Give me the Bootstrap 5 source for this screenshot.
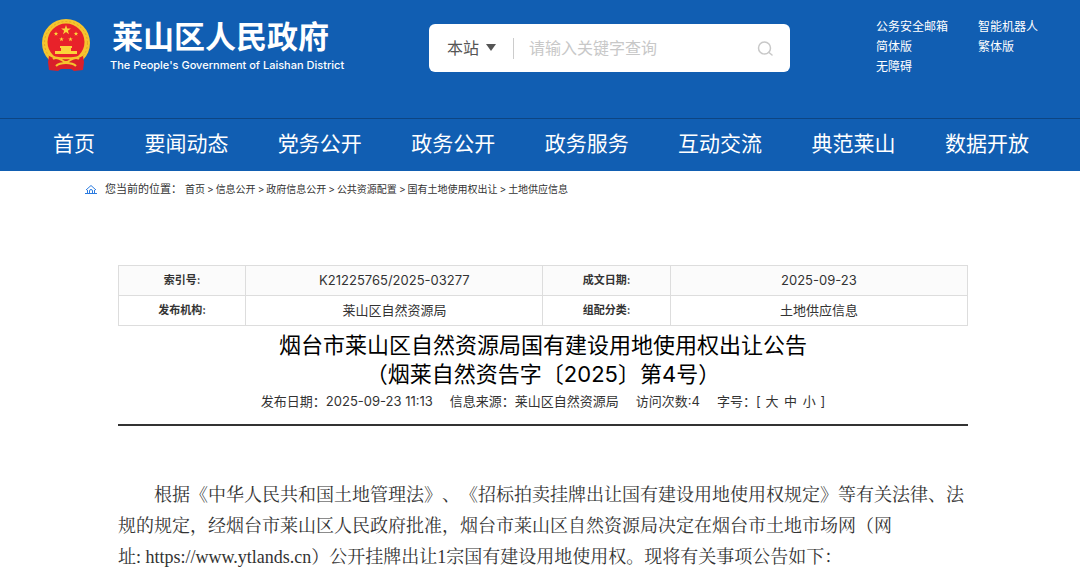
<!DOCTYPE html>
<html lang="zh-CN">
<head>
<meta charset="utf-8">
<meta name="viewport" content="width=device-width, initial-scale=1">
<title>烟台市莱山区自然资源局国有建设用地使用权出让公告</title>
<link href="https://cdn.jsdelivr.net/npm/bootstrap@5.3.0/dist/css/bootstrap.min.css" rel="stylesheet">
<style>
  body { font-family: Inter, "Noto Sans CJK SC", sans-serif; color: #333; background: #fff; text-spacing-trim: space-all; }
  a { color: inherit; text-decoration: none; }
  .site-header { background: #115eb2; color: #fff; }
  .masthead { display: grid; grid-template-columns: 387fr 447fr 204fr; height: 118px; padding-left: 42px; }
  .emblem { width: 48px; height: 54px; margin-top: 18px; }
  .brand-text { padding: 17px 0 0 20px; white-space: nowrap; }
  .brand-cn { font-size: 31px; line-height: 40px; font-weight: 700; margin: 0; padding-left: 2px; }
  .brand-en { font-size: 11px; line-height: 16px; font-weight: 500; margin: 0; }
  .search-box { height: 48px; max-width: 361px; margin-top: 24px; border-radius: 6px; background: #fff; padding: 0 17px 0 18px; }
  .search-box select { appearance: none; border: 0; background: transparent; color: #555; font-size: 16px; line-height: 24px; width: 50px; padding: 0; }
  .scope { position: relative; width: 51px; }
  .scope svg { position: absolute; right: 1px; top: 8px; pointer-events: none; }
  .divider { width: 1px; height: 21px; background: #ccc; margin: 0 15px 0 16px; }
  .search-box input { border: 0; outline: 0; padding: 0; min-width: 0; font-size: 16px; line-height: 24px; color: #555; }
  .search-box input::placeholder { color: #c8c8c8; opacity: 1; }
  .search-box button { border: 0; background: none; padding: 0; width: 18px; height: 18px; line-height: 1; }
  .tools { display: grid; grid-template-columns: 102px 1fr; align-content: start; font-size: 12px; line-height: 20px; padding-top: 17px; white-space: nowrap; }
  .main-nav { height: 53px; border-top: 1px solid #0d4583; padding: 0 51px 3px 53px; font-size: 21px; line-height: 30px; white-space: nowrap; }
  .crumbs { padding: 8px 85px 0; font-size: 11px; line-height: 20px; }
  .trail { font-size: 10px; margin-left: 3px; }
  .trail span { padding: 0 2px; }
  .article { margin: 66px 112px 0 118px; }
  .info { width: 100%; table-layout: fixed; text-align: center; border: 1px solid #ddd; }
  .info th, .info td { border: 1px solid #ddd; height: 30px; padding: 0 0 2px; }
  .info th { width: 15%; font-size: 11px; line-height: 20px; font-weight: 700; }
  .info td { width: 35%; font-size: 13px; line-height: 20px; }
  .info tr:first-child { background: #fbfbfb; }
  .headline { font-size: 22px; line-height: 29px; font-weight: 400; color: #000; margin: 5px 0 0; text-align: center; }
  .meta { font-size: 13px; line-height: 20px; padding: 2px 0 13px; border-bottom: 2px solid #333; gap: 17px; }
  .meta a { margin: 0 1px; }
  .content { font-family: "Liberation Serif", "Noto Serif CJK SC", "Noto Sans CJK SC", serif; font-size: 18px; line-height: 31px; text-indent: 36px; margin: 54px 0 0; }
</style>
</head>
<body>
<header class="site-header">
  <div class="masthead">
    <div class="d-flex">
      <svg class="emblem flex-shrink-0" viewBox="0 0 48 54" aria-hidden="true">
        <circle cx="24" cy="25" r="24" fill="#f5c52e"/>
        <circle cx="24" cy="25" r="21.500" fill="none" stroke="#e5a426" stroke-width="1" stroke-dasharray="2 2"/>
        <circle cx="24" cy="24" r="18.500" fill="#e8222a"/>
        <path fill="#fbd43a" d="M24 7l1.200 3.500h3.700l-3 2.200 1.100 3.600-3-2.200-3 2.200 1.100-3.600-3-2.200h3.700z"/>
        <g fill="#fbd43a">
          <path id="st" d="M14 13.500l.6 1.600h1.700l-1.400 1 .5 1.700-1.400-1-1.400 1 .5-1.700-1.400-1h1.700z"/>
          <use href="#st" x="20"/><use href="#st" x="5.500" y="5.500"/><use href="#st" x="14.500" y="5.500"/>
          <path d="M18 28h12v2h-1v3h6v3H13v-3h6v-3h-1z"/>
        </g>
        <path fill="#d9202a" d="M7 38l9 3h16l9-3 1 6-1 8-9 1-3-2H19l-3 2-9-1-1-8z"/>
        <path d="M9 38c5 3 25 3 30 0M11 41c5-4 9 3 13 3s8-7 13-3M14 48c4-4 16-4 20 0" fill="none" stroke="#f5c52e" stroke-width="2"/>
      </svg>
      <div class="brand-text">
        <h1 class="brand-cn">莱山区人民政府</h1>
        <p class="brand-en">The People's Government of Laishan District</p>
      </div>
    </div>
    <form class="search-box d-flex align-items-center" role="search">
      <div class="scope d-flex align-items-center">
        <select aria-label="搜索范围"><option>本站</option></select>
        <svg width="10" height="7" viewBox="0 0 10 7" aria-hidden="true"><path d="M0 0h10L5 7z" fill="#555"/></svg>
      </div>
      <span class="divider"></span>
      <input class="flex-grow-1" type="text" placeholder="请输入关键字查询" aria-label="关键字">
      <button type="button" aria-label="搜索"><svg width="16" height="16" viewBox="0 0 16 16" fill="none" stroke="#c8c8c8" stroke-width="1.500" stroke-linecap="round"><circle cx="7.500" cy="7" r="6"/><path d="M12 11.500l3 2.500"/></svg></button>
    </form>
    <div class="tools">
      <a href="#">公务安全邮箱</a><a href="#">智能机器人</a>
      <a href="#">简体版</a><a href="#">繁体版</a>
      <a href="#">无障碍</a>
    </div>
  </div>
  <nav class="main-nav d-flex justify-content-between align-items-center">
    <a href="#">首页</a><a href="#">要闻动态</a><a href="#">党务公开</a><a href="#">政务公开</a><a href="#">政务服务</a><a href="#">互动交流</a><a href="#">典范莱山</a><a href="#">数据开放</a>
  </nav>
</header>
<nav class="crumbs d-flex align-items-center" aria-label="当前位置">
  <svg class="me-2" width="12" height="11" viewBox="0 0 12 11" fill="none" stroke="#2b7be0" aria-hidden="true"><path d="M1 6l5-4.500L11 6M2.500 6v3.500M9.500 6v3.500M0 9.500h12M4.500 9.500V7a1.500 1.500 0 0 1 3 0v2.500"/></svg>
  <span>您当前的位置：</span>
  <div class="trail"><a href="#">首页</a><span>&gt;</span><a href="#">信息公开</a><span>&gt;</span><a href="#">政府信息公开</a><span>&gt;</span><a href="#">公共资源配置</a><span>&gt;</span><a href="#">国有土地使用权出让</a><span>&gt;</span><a href="#">土地供应信息</a></div>
</nav>
<main class="article">
  <table class="info">
    <tr><th scope="row">索引号:</th><td>K21225765/2025-03277</td><th scope="row">成文日期:</th><td>2025-09-23</td></tr>
    <tr><th scope="row">发布机构:</th><td>莱山区自然资源局</td><th scope="row">组配分类:</th><td>土地供应信息</td></tr>
  </table>
  <h2 class="headline">烟台市莱山区自然资源局国有建设用地使用权出让公告<br>（烟莱自然资告字〔2025〕第4号）</h2>
  <div class="meta d-flex justify-content-center">
    <span>发布日期：2025-09-23 11:13</span><span>信息来源：莱山区自然资源局</span><span>访问次数:4</span>
    <span>字号：[ <a href="#">大</a> <a href="#">中</a> <a href="#">小</a> ]</span>
  </div>
  <p class="content">根据《中华人民共和国土地管理法》、《招标拍卖挂牌出让国有建设用地使用权规定》等有关法律、法规的规定，经烟台市莱山区人民政府批准，烟台市莱山区自然资源局决定在烟台市土地市场网（网<span class="text-nowrap">址: https://www.ytlands.cn</span>）公开挂牌出让1宗国有建设用地使用权。现将有关事项公告如下：</p>
</main>
<script src="https://cdn.jsdelivr.net/npm/bootstrap@5.3.0/dist/js/bootstrap.bundle.min.js"></script>
</body>
</html>
